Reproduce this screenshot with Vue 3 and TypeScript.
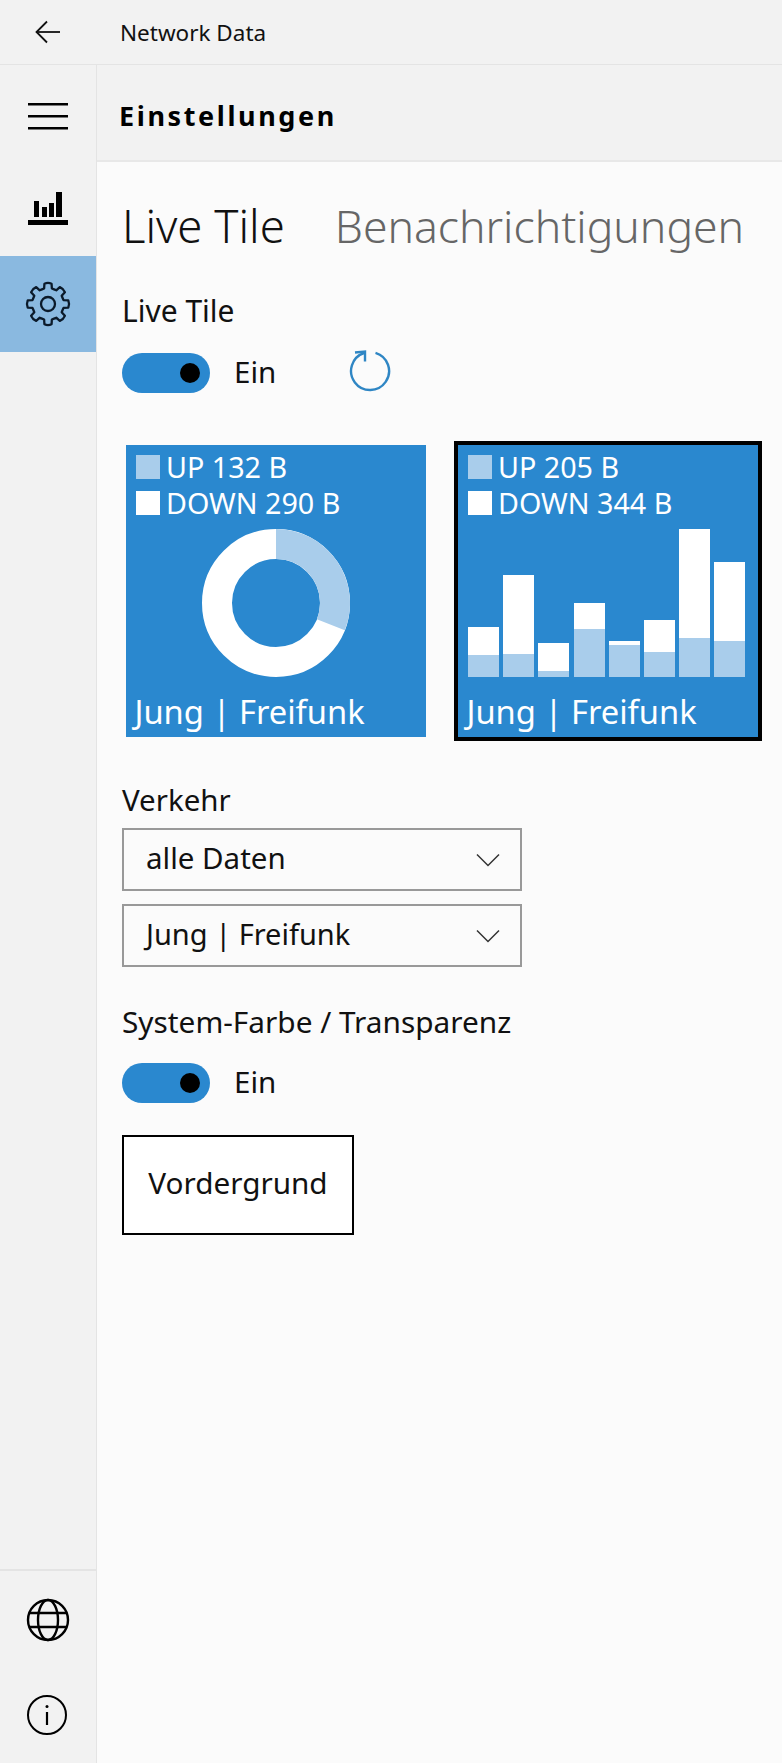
<script setup lang="ts">
const gearPath = (() => {
  const cx = 24, cy = 24, teeth = 8
  const parts: string[] = []
  for (let i = 0; i < teeth; i++) {
    const a = (i * 360) / teeth - 90
    const pt = (r: number, d: number) => {
      const t = ((a + d) * Math.PI) / 180
      return `${(cx + r * Math.cos(t)).toFixed(2)} ${(cy + r * Math.sin(t)).toFixed(2)}`
    }
    parts.push(`${i === 0 ? 'M' : 'L'}${pt(15.8, -22.5)}`)
    parts.push(`L${pt(16, -14)}`)
    parts.push(`L${pt(20.6, -10)}`)
    parts.push(`Q${pt(21.8, 0)} ${pt(20.6, 10)}`)
    parts.push(`L${pt(16, 14)}`)
  }
  return parts.join(' ') + ' Z'
})()

interface Bar { down: number; up: number }
const bars: Bar[] = [
  { down: 28, up: 22 },
  { down: 79, up: 23 },
  { down: 28, up: 6 },
  { down: 26, up: 48 },
  { down: 4, up: 32 },
  { down: 32, up: 25 },
  { down: 109, up: 39 },
  { down: 79, up: 36 },
]
</script>

<template>
  <div class="app">
    <header class="titlebar">
      <span class="back">
        <svg width="48" height="48" viewBox="0 0 48 48" fill="none" stroke="#111" stroke-width="1.800">
          <path d="M23 13.500 12.500 24 23 34.500" />
          <path d="M12.500 24H36" />
        </svg>
      </span>
      <span class="app-name">Network Data</span>
    </header>
    <div class="main">
      <nav class="nav">
        <div class="nav-item nav-item-first">
          <svg width="48" height="48" viewBox="0 0 48 48" fill="#000">
            <rect x="4" y="14" width="40" height="2.500" />
            <rect x="4" y="26" width="40" height="2.500" />
            <rect x="4" y="38" width="40" height="2.500" />
          </svg>
        </div>
        <div class="nav-item">
          <svg width="48" height="48" viewBox="0 0 48 48" fill="#000">
            <rect x="4" y="36" width="40" height="5" />
            <rect x="10" y="17" width="5" height="16" />
            <rect x="18" y="23" width="5" height="10" />
            <rect x="25" y="19" width="5" height="14" />
            <rect x="32" y="8" width="6" height="25" />
          </svg>
        </div>
        <div class="nav-item nav-item-active">
          <svg width="48" height="48" viewBox="0 0 48 48" fill="none" stroke="#0b1a2a" stroke-width="2.300">
            <path :d="gearPath" stroke-linejoin="round" />
            <circle cx="24" cy="24" r="7" />
          </svg>
        </div>
        <div class="nav-spacer"></div>
        <div class="nav-item nav-item-divided">
          <svg width="48" height="48" viewBox="0 0 48 48" fill="none" stroke="#000" stroke-width="2.400">
            <circle cx="24" cy="25" r="20" />
            <ellipse cx="24" cy="25" rx="10" ry="20" />
            <path d="M6 18H42M6 32H42" />
          </svg>
        </div>
        <div class="nav-item">
          <svg width="48" height="48" viewBox="0 0 48 48" fill="none" stroke="#000" stroke-width="2">
            <circle cx="23" cy="24" r="19" />
            <path d="M23 21V34" stroke-width="2.200" />
            <circle cx="23" cy="15.500" r="1.500" fill="#000" stroke="none" />
          </svg>
        </div>
      </nav>
      <div class="content">
        <div class="page-header">Einstellungen</div>
        <div class="page-body">
          <div class="tabs">
            <span class="tab tab-active">Live Tile</span>
            <span class="tab">Benachrichtigungen</span>
          </div>

          <div class="label">Live Tile</div>
          <div class="toggle-row">
            <span class="toggle"><span class="knob"></span></span>
            <span class="toggle-text">Ein</span>
            <svg class="refresh" width="44" height="44" viewBox="0 0 44 44" fill="none" stroke="#2f86c4" stroke-width="2.400">
              <path d="M27.500 3.800A19 19 0 1 1 16 4" />
              <path d="M7 3.500 17 2.500V12.500" />
            </svg>
          </div>

          <div class="tiles">
            <div class="tile-frame">
              <div class="tile">
                <div class="legend"><i class="swatch swatch-up"></i><span class="legend-text">UP 132 B</span></div>
                <div class="legend"><i class="swatch swatch-down"></i><span class="legend-text">DOWN 290 B</span></div>
                <div class="chart chart-donut">
                  <svg width="148" height="148" viewBox="0 0 148 148">
                    <circle cx="74" cy="74" r="59" fill="none" stroke="#fff" stroke-width="30" />
                    <path d="M74 0A74 74 0 0 1 142.800 101.300L114.900 90.200A44 44 0 0 0 74 30Z" fill="#a9cdeb" />
                  </svg>
                </div>
                <div class="tile-name">Jung | Freifunk</div>
              </div>
            </div>
            <div class="tile-frame tile-frame-selected">
              <div class="tile">
                <div class="legend"><i class="swatch swatch-up"></i><span class="legend-text">UP 205 B</span></div>
                <div class="legend"><i class="swatch swatch-down"></i><span class="legend-text">DOWN 344 B</span></div>
                <div class="chart chart-bars">
                  <div v-for="(b, i) in bars" :key="i" class="bar">
                    <div class="bar-down" :style="{ height: b.down + 'px' }"></div>
                    <div class="bar-up" :style="{ height: b.up + 'px' }"></div>
                  </div>
                </div>
                <div class="tile-name">Jung | Freifunk</div>
              </div>
            </div>
          </div>

          <div class="label label-traffic">Verkehr</div>
          <div class="select">
            <span class="select-text">alle Daten</span>
            <svg width="24" height="14" viewBox="0 0 24 14" fill="none" stroke="#333" stroke-width="1.500"><path d="M1 1.500 12 12.500 23 1.500" /></svg>
          </div>
          <div class="select select-second">
            <span class="select-text select-text-narrow">Jung | Freifunk</span>
            <svg width="24" height="14" viewBox="0 0 24 14" fill="none" stroke="#333" stroke-width="1.500"><path d="M1 1.500 12 12.500 23 1.500" /></svg>
          </div>

          <div class="label label-system">System-Farbe / Transparenz</div>
          <div class="toggle-row toggle-row-system">
            <span class="toggle"><span class="knob"></span></span>
            <span class="toggle-text">Ein</span>
          </div>
          <button class="button" type="button">Vordergrund</button>
        </div>
      </div>
    </div>
  </div>
</template>

<style>
html, body { margin: 0; background: #fbfbfb; }
</style>

<style scoped>
.app {
  width: 782px;
  height: 1763px;
  display: flex;
  flex-direction: column;
  overflow: hidden;
  font-family: "Noto Sans", "Open Sans", sans-serif;
  color: #111;
  background: #fbfbfb;
}
.titlebar {
  height: 64px;
  flex: none;
  display: flex;
  align-items: center;
  background: #f2f2f2;
  border-bottom: 1px solid #e4e4e4;
}
.back { width: 120px; padding-left: 24px; box-sizing: border-box; display: flex; }
.app-name { font-size: 22.500px; }
.main { flex: 1; display: flex; min-height: 0; }
.nav {
  width: 96px;
  flex: none;
  display: flex;
  flex-direction: column;
  background: #f2f2f2;
  border-right: 1px solid #e4e4e4;
}
.nav-item { height: 96px; flex: none; display: flex; align-items: center; justify-content: center; }
.nav-item-first { height: 95px; }
.nav-item-active { background: #8ab9e0; }
.nav-item-divided { border-top: 2px solid #e4e4e4; }
.nav-spacer { flex: 1; }
.content { flex: 1; display: flex; flex-direction: column; min-width: 0; }
.page-header {
  height: 97px;
  flex: none;
  box-sizing: border-box;
  display: flex;
  align-items: center;
  padding: 5px 0 0 22px;
  background: #f2f2f2;
  border-bottom: 2px solid #e8e8e8;
  font-size: 27px;
  font-weight: 700;
  letter-spacing: 2.600px;
  color: #000;
}
.page-body { padding: 0 0 0 25px; }
.tabs { display: flex; align-items: baseline; gap: 50px; height: 60px; padding-top: 33px; margin-bottom: 36px; white-space: nowrap; }
.tab { font-size: 44.500px; font-weight: 300; line-height: 60px; color: #666; }
.tab-active { font-size: 45.500px; color: #111; }
.label { font-size: 30px; line-height: 40px; }
.toggle-row { display: flex; align-items: center; height: 40px; margin-top: 22px; }
.toggle {
  width: 88px;
  height: 40px;
  border-radius: 20px;
  background: #2a88cf;
  position: relative;
  flex: none;
}
.knob {
  position: absolute;
  right: 10px;
  top: 10px;
  width: 20px;
  height: 20px;
  border-radius: 50%;
  background: #000;
}
.toggle-text { font-size: 29.500px; margin: 0 0 4px 24px; }
.refresh { margin-left: 72px; margin-top: -5px; }
.tiles { display: flex; gap: 24px; margin-top: 48px; }
.tile-frame { padding: 4px; }
.tile-frame-selected { background: #000; }
.tile {
  width: 300px;
  height: 292px;
  box-sizing: border-box;
  padding: 10px 0 0 10px;
  background: #2a88cf;
  color: #fff;
  display: flex;
  flex-direction: column;
}
.legend { display: flex; align-items: center; height: 24px; margin-bottom: 12px; font-size: 28.700px; white-space: nowrap; }
.legend-text { margin-bottom: 2px; }
.swatch { width: 24px; height: 24px; margin-right: 6px; flex: none; }
.swatch-up { background: #a9cdeb; }
.swatch-down { background: #fff; }
.chart { flex: none; }
.chart-donut { height: 148px; padding-left: 66px; margin-top: 2px; }
.chart-donut svg { display: block; }
.chart-bars { height: 148px; margin-top: 2px; display: flex; gap: 4.200px; align-items: flex-end; }
.bar { width: 31px; flex: none; }
.bar-down { background: #fff; }
.bar-up { background: #a9cdeb; }
.tile-name { font-size: 32.700px; line-height: 44px; margin-top: 13px; margin-left: -1.500px; white-space: nowrap; }
.label-traffic { margin-top: 39px; font-size: 29.500px; }
.select {
  width: 400px;
  height: 63px;
  box-sizing: border-box;
  margin-top: 8px;
  padding: 0 20px 0 22px;
  display: flex;
  align-items: center;
  justify-content: space-between;
  border: 2px solid #999;
  background: #fbfbfb;
  font-size: 29.500px;
}
.select-text { margin-bottom: 4px; }
.select-text-narrow { font-size: 29px; }
.select-second { margin-top: 13px; }
.label-system { margin-top: 35px; font-size: 29.800px; }
.toggle-row-system { margin-top: 21px; }
.button {
  display: block;
  margin-top: 32px;
  width: 232px;
  height: 100px;
  box-sizing: border-box;
  padding: 0 0 6px;
  border: 2px solid #000;
  background: #fff;
  color: #111;
  font-family: inherit;
  font-size: 29.700px;
}
</style>
